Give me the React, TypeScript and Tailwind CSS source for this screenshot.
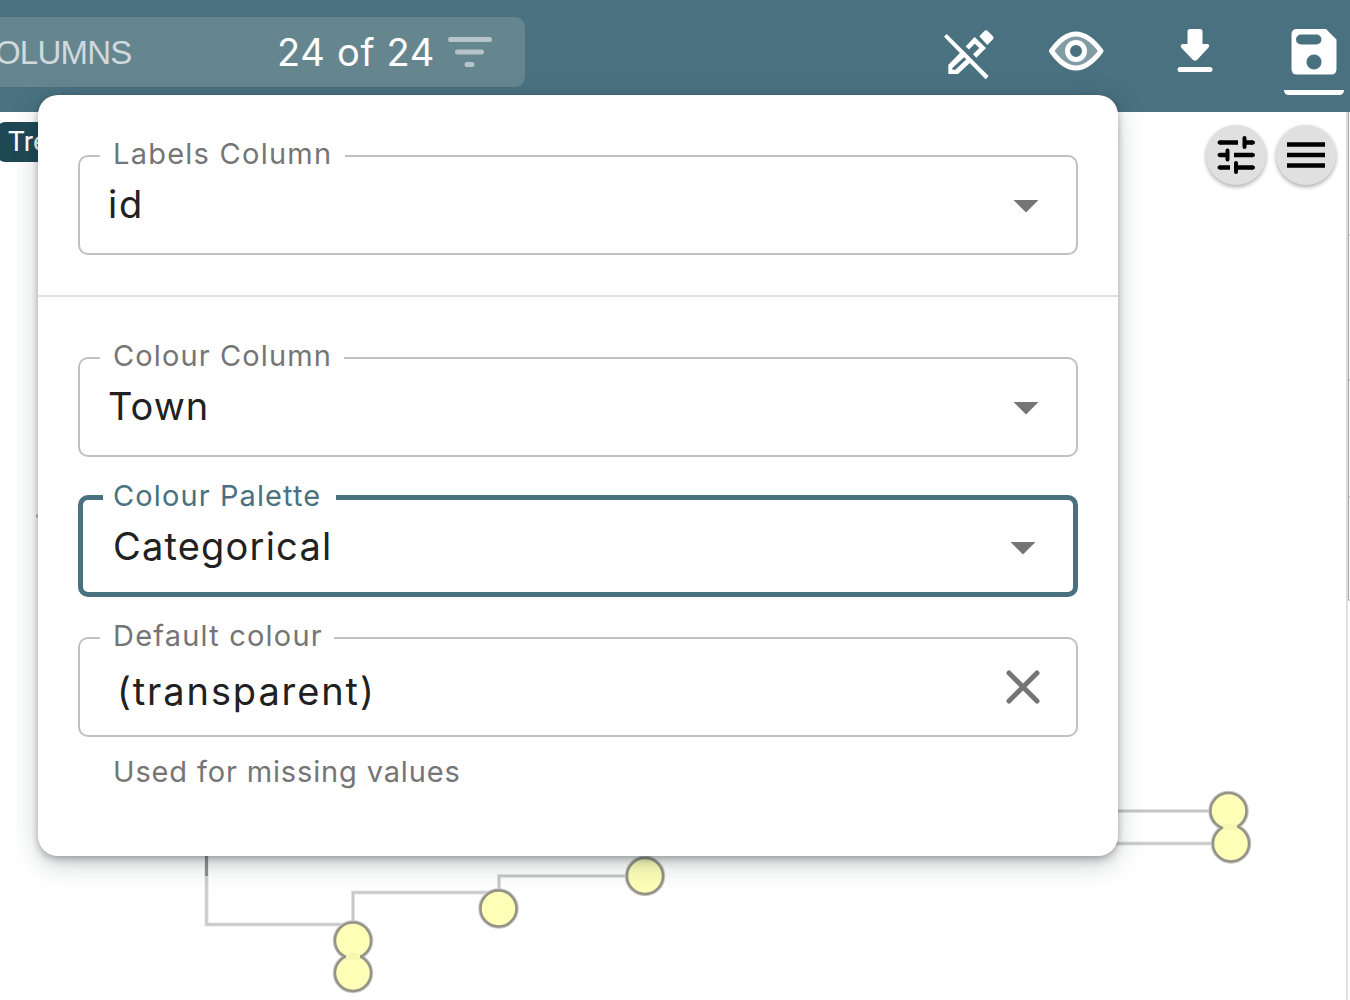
import React from "react";

const ui = "font-['Inter',sans-serif]";

function Caret() {
  return (
    <svg width="26" height="13" viewBox="0 0 26 13" className="shrink-0 fill-[#757575]">
      <path d="M.5 0h25L13 12.5z" />
    </svg>
  );
}

function Field({ label, value, focused = false, labelClass, valueClass, children }: {
  label: string; value: string; focused?: boolean; labelClass: string; valueClass: string; children: React.ReactNode;
}) {
  return (
    <div
      className={
        "relative flex justify-between rounded-[10px] " +
        (focused ? "h-[102px] border-[5px] border-[#4a7180]" : "h-[100px] border-2 border-[#c1c1c1]")
      }
    >
      <span className={"absolute h-8 whitespace-nowrap bg-white text-[29px] leading-8 " + labelClass}>{label}</span>
      <span className={"whitespace-nowrap text-[38px] leading-[48px] text-[#212121] " + valueClass}>{value}</span>
      {children}
    </div>
  );
}

export default function App() {
  return (
    <div className={"relative flex h-[1000px] w-[1350px] flex-col overflow-hidden bg-white " + ui}>
      <header className="flex h-28 shrink-0 justify-between bg-[#4a7180]">
        <div className="mt-[17px] flex h-[70px] w-[525px] items-center rounded-r-[10px] bg-[#66868f]">
          <span className="-ml-[5px] w-[282px] whitespace-nowrap pt-[2px] font-['Liberation_Sans',sans-serif] text-[33px] tracking-[-0.8px] text-[#d0dadd]">OLUMNS</span>
          <span className="w-[171px] whitespace-nowrap text-[38px] tracking-[0.7px] text-white">24 of 24</span>
          <svg width="44" height="32" viewBox="0 0 44 32" className="fill-none stroke-[#b5c4ca]" strokeWidth="5" strokeLinecap="round">
            <path d="M2.500 3.500h39M9.500 16h24M19 28.500h5" />
          </svg>
        </div>
        <div className="relative flex">
          <svg width="420" height="112" viewBox="930 0 420 112" className="fill-white">
            <g transform="translate(940 24) scale(.3333)">
              <path d="M118 37l15-16q5-5 10 0l16 16q4 5 0 9l-17 17z" />
              <path d="M82 72l22-23 24 23-24 24" fill="none" stroke="#fff" strokeWidth="14" />
              <path fillRule="evenodd" d="M25 122L68 79l30 30-44 41H25zM37 137h9l34-32-6-7-37 34z" />
              <path d="M12 38l8-8 126 126-9 10z" />
            </g>
            <path d="M1051.500 51Q1075.500 17 1101 51 1075.500 85 1051.500 51z" className="fill-[#829ca6] stroke-white" strokeWidth="5" strokeLinejoin="round" />
            <circle cx="1076" cy="51" r="8.500" className="fill-[#4a7180] stroke-white" strokeWidth="5" />
            <path d="M1190 29h10q2.500 0 2.500 2.500V44h5q3 1 1 3.500L1197 60q-2 1.500-4 0L1181.500 48q-2-3 1-4h5V31.500Q1187.500 29 1190 29z" />
            <rect x="1177.500" y="67" width="35" height="5" rx="2.500" />
            <path fillRule="evenodd" d="M1297 29h29l10.500 10.500V69q0 5.500-5.500 5.500h-34q-5.500 0-5.500-5.500V34.500Q1291.500 29 1297 29zm4 5.500a5 5 0 0 0 0 10h15.500a5 5 0 0 0 0-10zm13 20a7.500 7.500 0 1 0 .01 0z" />
            <path d="M1284 90h60q0 5-5 5h-50q-5 0-5-5z" />
          </svg>
        </div>
      </header>

      <main className="relative min-h-0 flex-1">
        <svg width="1350" height="888" viewBox="0 112 1350 888" className="block fill-none">
          <path d="M206.500 850v74.500H353M353 940V892.500H499M499 900V876H645M1110 811h118M1110 843.500h120" stroke="#e2e2e2" strokeWidth="4" />
          <path d="M206.500 850v74.500H353M353 940V892.500H499M499 900V876H645M1110 811h118M1110 843.500h120" stroke="#c6c6c6" strokeWidth="2" />
          <path d="M206.500 850v26" stroke="#909191" strokeWidth="3" />
          <g fill="none" stroke="#c9c9c4" strokeWidth="4.500">
            <circle cx="645" cy="876" r="18" />
            <circle cx="498.500" cy="908.500" r="18" />
            <circle cx="353" cy="940.500" r="18" />
            <circle cx="353" cy="973" r="18" />
            <circle cx="1228.500" cy="811" r="18" />
            <circle cx="1231" cy="843.500" r="18" />
          </g>
          <g fill="#ffffb8" stroke="#939387" strokeWidth="2.500">
            <circle cx="645" cy="876" r="18" />
            <circle cx="498.500" cy="908.500" r="18" />
            <circle cx="353" cy="940.500" r="18" />
            <circle cx="353" cy="973" r="18" />
            <circle cx="1228.500" cy="811" r="18" />
            <circle cx="1231" cy="843.500" r="18" />
          </g>
          <path d="M346 957h14M1223 827h14" stroke="#f7f7b0" strokeWidth="6" />
          <path d="M36 516h3" stroke="#b5b5b5" strokeWidth="3" />
          <path d="M1347 112v888" stroke="#dedede" strokeWidth="2" />
          <path d="M1348.500 112v488M1348 235h2M1348 380h2M1348 497h2M1348 600h2" stroke="#a8a8a8" />
        </svg>
        <span className="absolute -left-[3px] top-[10px] flex h-10 w-24 items-center rounded-lg bg-[#1f4855] pl-[11px] font-['Roboto',sans-serif] text-[28px] text-white">Tree</span>
        <div className="absolute right-[14px] top-[13px] flex gap-[10px]">
          <span className="flex size-[60px] items-center justify-center rounded-full bg-[#e0e0e0] shadow-[0_2px_4px_#00000055]">
            <svg width="38" height="38" viewBox="0 0 38 38" fill="none" stroke="#000" strokeWidth="4">
              <path d="M2.500 6.500h18.500M27 6.500h9M2.500 19h8M17 19h19M2.500 31.500h10.500M19 31.500h17" strokeWidth="4.300" />
              <path d="M2.500 6.500h1M27.500 2v9M35 6.500h1M2.500 19h1M10.500 14.500v9M35 19h1M2.500 31.500h1M19 27v9M35 31.500h1" strokeLinecap="round" />
            </svg>
          </span>
          <span className="flex size-[60px] items-center justify-center rounded-full bg-[#e0e0e0] shadow-[0_2px_4px_#00000055]">
            <svg width="38" height="26" viewBox="0 0 38 26" fill="none" stroke="#000" strokeWidth="4.300">
              <path d="M0 2.500h38M0 13h38M0 23.500h38" />
            </svg>
          </span>
        </div>
      </main>

      <section className="absolute left-[38px] top-[95px] flex h-[761px] w-[1080px] flex-col rounded-[20px] bg-white shadow-[0_6px_10px_-2px_#20303038,0_8px_28px_#20303038,0_1px_6px_#00000030]">
        <div className="h-[202px] border-b-2 border-[#e0e0e0] px-10 pt-[60px]">
          <Field label="Labels Column" value="id" labelClass="left-5 -top-[19px] w-[245px] pl-[13px] tracking-[1.25px] text-[#757575]" valueClass="ml-[28px] mt-[23px] tracking-[1.8px]">
            <span className="mr-[37px] mt-[43px]"><Caret /></span>
          </Field>
        </div>
        <div className="flex flex-col px-10 pt-[60px]">
          <Field label="Colour Column" value="Town" labelClass="left-5 -top-[19px] w-[244px] pl-[13px] tracking-[1.12px] text-[#757575]" valueClass="ml-[28px] mt-[23px] tracking-[1px]">
            <span className="mr-[37px] mt-[43px]"><Caret /></span>
          </Field>
          <div className="mt-[38px]">
            <Field focused label="Colour Palette" value="Categorical" labelClass="left-5 -top-[20px] w-[233px] pl-[10px] tracking-[1.1px] text-[#4a7180]" valueClass="ml-[30px] mt-[22px] tracking-[1.2px]">
              <span className="mr-[37px] mt-[42px]"><Caret /></span>
            </Field>
          </div>
          <div className="mt-10">
            <Field label="Default colour" value="(transparent)" labelClass="left-5 -top-[19px] w-[234px] pl-[13px] tracking-[1.2px] text-[#757575]" valueClass="ml-[37px] mt-[28px] tracking-[1.9px]">
              <svg width="34" height="34" viewBox="0 0 34 34" className="mr-[36px] mt-[31px] shrink-0 fill-none stroke-[#757575]" strokeWidth="5" strokeLinecap="round">
                <path d="M3 3l28 28M31 3 3 31" />
              </svg>
            </Field>
          </div>
          <p className="ml-[35px] mt-[19px] text-[29px] leading-8 tracking-[0.85px] text-[#757575]">Used for missing values</p>
        </div>
      </section>
    </div>
  );
}
